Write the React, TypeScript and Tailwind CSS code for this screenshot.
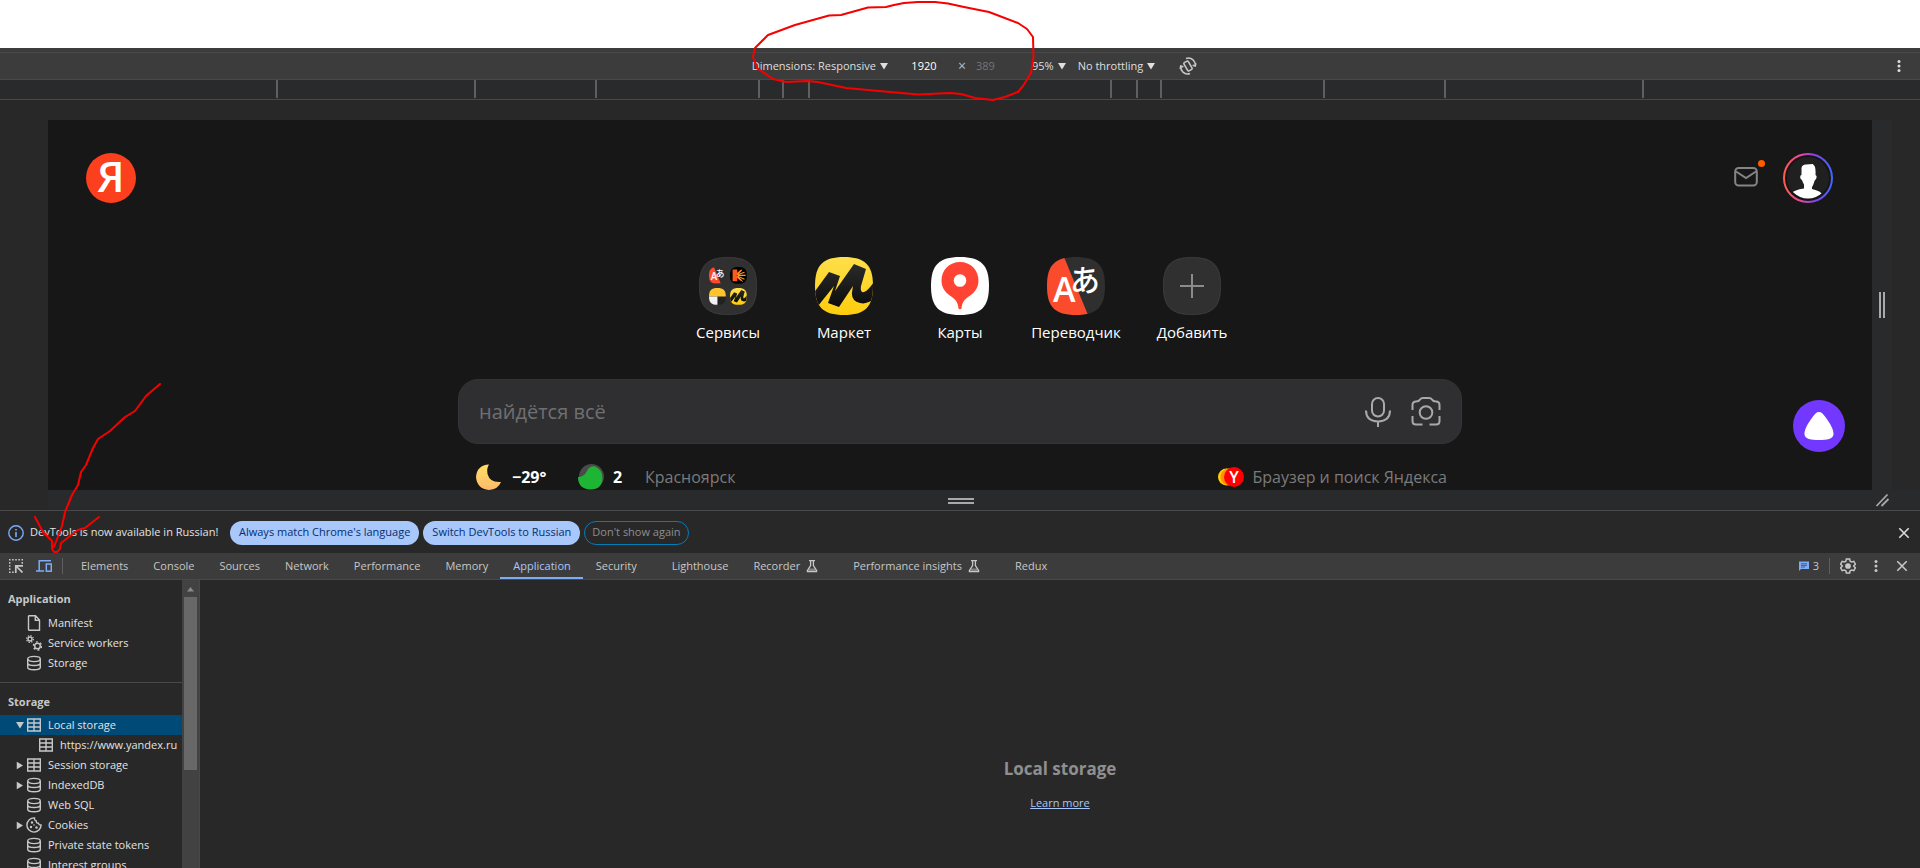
import { ReactNode } from "react";

const ruler = [198, 121, 163, 24, 26];

function Tri({ className = "" }: { className?: string }) {
  return (
    <svg viewBox="0 0 8 7" className={`h-[7px] w-2 shrink-0 fill-current ${className}`} aria-hidden="true">
      <path d="M0 0h8L4 6.5z" />
    </svg>
  );
}

function Close() {
  return (
    <svg viewBox="0 0 12 12" className="size-3" fill="none" stroke="currentColor" strokeWidth="1.6" aria-hidden="true">
      <path d="M1.3 1.3l9.4 9.4M10.7 1.3l-9.4 9.4" />
    </svg>
  );
}

function Dots() {
  return (
    <svg viewBox="0 0 4 14" className="h-[14px] w-1 fill-current" aria-hidden="true">
      <circle cx="2" cy="2.4" r="1.5" />
      <circle cx="2" cy="7" r="1.5" />
      <circle cx="2" cy="11.6" r="1.5" />
    </svg>
  );
}

function Flask() {
  return (
    <svg viewBox="0 0 12 14" className="h-[14px] w-3" fill="none" stroke="currentColor" strokeWidth="1.3" aria-hidden="true">
      <path d="M3 1.6h6M4.6 1.6v5L1.4 11.6q-.5 1 .6 1h8q1.100 0 .6-1L7.400 6.600v-5" />
      <path d="M3.500 9.500h5l1.500 2.500h-8z" fill="currentColor" stroke="none" opacity=".5" />
    </svg>
  );
}

function DeviceToolbar() {
  const tri = <Tri className="ml-1" />;
  return (
    <div className="border-t-4 border-[#3c3c3c]">
      <div className="flex h-7 items-center border-y border-[#494949] bg-[#3c3c3c] text-[#dfdfdf]">
        <div className="flex-1 pl-12" />
        <div className="flex items-center">
          <button className="flex items-center whitespace-nowrap">Dimensions: Responsive{tri}</button>
          <input aria-label="Width" defaultValue="1920" className="ml-3 w-12 bg-transparent text-center text-white" />
          <span className="w-7 text-center text-sm text-[#bdbdbd]">×</span>
          <input aria-label="Height" defaultValue="389" className="w-8 bg-transparent text-[#757575]" />
          <button className="ml-6 flex items-center">95%{tri}</button>
          <button className="ml-3 flex items-center whitespace-nowrap">No throttling{tri}</button>
          <button aria-label="Rotate" className="ml-6 text-[#c7c7c7]">
            <svg viewBox="0 0 18 18" className="size-[18px]" fill="none" stroke="currentColor" strokeWidth="1.6">
              <rect x="6.500" y="4.300" width="5" height="9.400" rx="1" transform="rotate(-30 9 9)" />
              <path d="M7 1.500Q11 0 14 2.800Q16.600 5.500 16.300 9M16.800 6.200L16.300 9L13.600 8.200M11 16.500Q7 18 4 15.200Q1.400 12.500 1.700 9M1.200 11.800L1.700 9L4.400 9.800" />
            </svg>
          </button>
        </div>
        <div className="flex flex-1 justify-end pr-[19px]">
          <button aria-label="More options"><Dots /></button>
        </div>
      </div>
    </div>
  );
}

function Ruler() {
  return (
    <div className="flex h-5 justify-center border-b border-[#494949] bg-[#292a2b] pb-px">
      {ruler.map((w, i) => (
        <div key={i} className="flex h-[18px]">
          <div className="w-0.5 bg-[#5f5f5f]" />
          <div style={{ width: w - 2 }} />
        </div>
      ))}
      <div className="w-0.5 bg-[#5f5f5f]" />
      <div className="w-[300px]" />
      <div className="w-0.5 bg-[#5f5f5f]" />
      {[...ruler].reverse().map((w, i) => (
        <div key={i} className="flex h-[18px]">
          <div style={{ width: w - 2 }} />
          <div className="w-0.5 bg-[#5f5f5f]" />
        </div>
      ))}
    </div>
  );
}

const SQ = "M29 0C50 0 58 8 58 29S50 58 29 58S0 50 0 29S8 0 29 0z";

function MarketMark({ id }: { id: string }) {
  return (
    <>
      <defs>
        <linearGradient id={id} x1="0" y1="0" x2="0" y2="1">
          <stop offset="0" stopColor="#ffdf4a" />
          <stop offset="1" stopColor="#fecd0c" />
        </linearGradient>
        <linearGradient id={`${id}-b`} x1="0" y1="0" x2="0" y2="1">
          <stop offset="0" stopColor="#2b2b2b" />
          <stop offset="1" stopColor="#0c0c0c" />
        </linearGradient>
        <clipPath id={`${id}-c`}><path d={SQ} /></clipPath>
      </defs>
      <path d={SQ} fill={`url(#${id})`} />
      <g clipPath={`url(#${id}-c)`}>
        <path d="M-2 37L14 15L25 19L20 34L39 7L51 12L46 29Q45 36 49 35Q54 33 60 23V41Q52 48 45 46Q36 44 37 35L38 29L24 50L13 46L19 29L3 49z" fill={`url(#${id}-b)`} />
      </g>
    </>
  );
}

function TranslateMark({ id }: { id: string }) {
  return (
    <>
      <defs><clipPath id={id}><path d={SQ} /></clipPath></defs>
      <path d={SQ} fill="#2f2f2f" />
      <path d="M0 0H17L41 58H0z" fill="#fb4b2d" clipPath={`url(#${id})`} />
      <text x="6" y="45" fontSize="34" fill="#fff" fontFamily="Open Sans, sans-serif" fontWeight="600">A</text>
      <text x="23" y="34" fontSize="30" fill="#fff" fontFamily="Noto Sans CJK JP, sans-serif" fontWeight="500">あ</text>
    </>
  );
}

function Services() {
  return (
    <svg viewBox="0 0 58 58" className="size-[58px]" aria-hidden="true">
      <path d={SQ} fill="#303030" />
      <path d="M29 .5C49.500 .5 57.500 8.500 57.500 29S49.500 57.500 29 57.500S.5 49.500 .5 29S8.500 .5 29 .5z" fill="none" stroke="#3a3a3a" />
      <g transform="translate(10 10) scale(.29)"><TranslateMark id="tr-s" /></g>
      <g transform="translate(31 10) scale(.29)">
        <path d={SQ} fill="#000" />
        <path d="M12 12h10v34h-10zM20 29L38 12M20 29L38 46" stroke="#ff5a1c" strokeWidth="6" fill="#ff5a1c" />
        <path d="M26 27L50 18M26 29H54M26 32L50 42" stroke="#ff9d1c" strokeWidth="4" />
        <path d="M25 25L42 9M26 34L44 50" stroke="#d9d02c" strokeWidth="3" />
      </g>
      <g transform="translate(10 31) scale(.29)">
        <path d={SQ} fill="#222" />
        <path d="M0 29C0 8 8 0 29 0S58 8 58 29z" fill="#ffc42b" />
        <path d="M0 29H29V58C8 58 0 50 0 29z" fill="#f2f2f2" />
      </g>
      <g transform="translate(31 31) scale(.29)"><MarketMark id="mk-s" /></g>
    </svg>
  );
}

const apps: { label: string; icon: ReactNode }[] = [
  { label: "Сервисы", icon: <Services /> },
  { label: "Маркет", icon: <svg viewBox="0 0 58 58" className="size-[58px]" aria-hidden="true"><MarketMark id="mk" /></svg> },
  {
    label: "Карты",
    icon: (
      <svg viewBox="0 0 58 58" className="size-[58px]" aria-hidden="true">
        <path d={SQ} fill="#fff" />
        <path d="M29 5C39.500 5 47.500 13 47.500 23.500C47.500 32 42 37 37 40C33 43 31 46 30.500 51.500Q29 53 27.500 51.500C27 46 25 43 21 40C16 37 10.500 32 10.500 23.500C10.500 13 18.500 5 29 5z" fill="#ff4433" />
        <circle cx="29" cy="23.500" r="6.300" fill="#fff" />
      </svg>
    ),
  },
  { label: "Переводчик", icon: <svg viewBox="0 0 58 58" className="size-[58px]" aria-hidden="true"><TranslateMark id="tr" /></svg> },
  {
    label: "Добавить",
    icon: (
      <svg viewBox="0 0 58 58" className="size-[58px]" aria-hidden="true">
        <path d={SQ} fill="#303030" />
        <path d="M29 .5C49.500 .5 57.500 8.500 57.500 29S49.500 57.500 29 57.500S.5 49.500 .5 29S8.500 .5 29 .5z" fill="none" stroke="#3a3a3a" />
        <path d="M29 17v24M17 29h24" stroke="#8b8b8b" strokeWidth="2" />
      </svg>
    ),
  },
];

function YandexPage() {
  return (
    <main className="flex h-[370px] min-w-0 flex-1 flex-col overflow-hidden bg-[#171717] text-white">
      <header className="flex items-start justify-between pt-[33px] pr-[39px] pl-[38px]">
        <a href="#home" aria-label="Яндекс" className="flex size-[50px] items-center justify-center rounded-full bg-[#fc3f1d] text-[42px] leading-none font-semibold">
          <span className="pb-1">Я</span>
        </a>
        <div className="flex items-center gap-[25px]">
          <a href="#mail" aria-label="Почта" className="relative text-[#858585]">
            <svg viewBox="0 0 24 20" className="mb-0.5 h-5 w-6" fill="none" stroke="currentColor" strokeWidth="2">
              <rect x="1.200" y="1" width="21.600" height="17.600" rx="3.500" />
              <path d="M2 4.500L12 11L22 4.500" />
            </svg>
            <span className="absolute -top-[7px] -right-[7px] size-[7px] rounded-full bg-[#ff5c00]" />
          </a>
          <button aria-label="Профиль" className="size-[50px]">
            <svg viewBox="0 0 50 50" className="size-[50px]">
              <defs>
                <linearGradient id="ring">
                  <stop offset="0" stopColor="#ff5c4d" />
                  <stop offset=".35" stopColor="#eb469f" />
                  <stop offset=".65" stopColor="#8341ef" />
                  <stop offset="1" stopColor="#3f68f9" />
                </linearGradient>
                <clipPath id="face"><circle cx="25" cy="25" r="20.500" /></clipPath>
              </defs>
              <circle cx="25" cy="25" r="24" fill="#151515" stroke="url(#ring)" strokeWidth="2" />
              <circle cx="25" cy="25" r="21" fill="#202020" />
              <path clipPath="url(#face)" fill="#fff" d="M18.500 15Q19 11.500 23 11.500L30 11L30.500 12Q33 13 32.500 22Q34.500 23 33 26Q32 27 31.500 28Q30 33 29 34V36Q38 38 40 42L38 48H12L9 40Q11 37 21 35.500V31.500Q19.500 29 19 27Q16.500 26 17.500 22.500L18.500 22z" />
            </svg>
          </button>
        </div>
      </header>

      <nav className="mt-[54px] flex justify-center">
        {apps.map((a) => (
          <a key={a.label} href="#app" className="flex w-[116px] flex-col items-center gap-[5px] text-[15px] leading-6">
            {a.icon}
            {a.label}
          </a>
        ))}
      </nav>

      <div className="flex">
        <div className="flex-1" />
        <div className="mt-[35px] w-[1004px]">
          <form className="flex h-[65px] items-center rounded-[20px] border border-[#343436] bg-[#2f2f31] px-5 text-[#a9a9a9]">
            <input aria-label="Поиск" placeholder="найдётся всё" className="min-w-0 flex-1 bg-transparent text-xl placeholder:text-[#6f6f71]" />
            <button type="button" aria-label="Голосовой поиск">
              <svg viewBox="0 0 26 30" className="h-[30px] w-[26px]" fill="none" stroke="currentColor" strokeWidth="2">
                <rect x="7" y="1" width="12" height="18.500" rx="6" />
                <path d="M1 13.500Q1 24 13 24.500Q25 24 25 13.500M13 24.500V30" />
              </svg>
            </button>
            <button type="button" aria-label="Поиск по картинке" className="ml-5">
              <svg viewBox="0 0 30 30" className="size-[30px]" fill="none" stroke="currentColor" strokeWidth="2">
                <path d="M1.500 13V8Q1.500 4.500 5 4.500Q8 4.500 9 2.500Q10 1 12 1H18Q20 1 21 2.500Q22 4.500 25 4.500Q28.500 4.500 28.500 8V13M28.500 19V24Q28.500 27.500 25 27.500H18.500M11.500 27.500H5Q1.500 27.500 1.500 24V19" />
                <circle cx="15" cy="15.500" r="6.300" />
              </svg>
            </button>
          </form>
          <div className="mt-5 flex h-[26px] items-center pr-[15px] pl-[18px] text-base">
            <svg viewBox="0 0 25 26" className="h-[26px] w-[25px]">
              <defs><linearGradient id="moon" x1="0" y1="0" x2="0" y2="1"><stop offset="0" stopColor="#ffe066" /><stop offset="1" stopColor="#ffb96a" /></linearGradient></defs>
              <path d="M13 .5Q10.500 4 11.500 10Q14 19 25 18Q22 25.500 13 26Q1 25 0 13Q1 1 13 .5z" fill="url(#moon)" />
            </svg>
            <b className="ml-[11px] w-[66px] font-bold">−29°</b>
            <svg viewBox="0 0 26 26" className="size-[26px]">
              <circle cx="13.500" cy="12.500" r="12.500" fill="#4a4a4a" />
              <path d="M0 13Q6 13 9 7Q12 1.500 17 2.500Q24 5 24.500 14Q24 25.500 12.500 25.500Q0 25 0 13z" fill="#1fb534" />
            </svg>
            <b className="ml-2 w-[33px] pl-px font-bold">2</b>
            <span className="text-[#7b7b7b]">Красноярск</span>
            <a href="#browser" className="ml-auto flex items-center gap-2 text-[#7b7b7b]">
              <svg viewBox="0 0 26 20" className="h-5 w-[26px]">
                <circle cx="8.500" cy="10" r="8.500" fill="#ffcf00" />
                <circle cx="11" cy="10" r="8.500" fill="#ff9000" />
                <circle cx="16" cy="10" r="10" fill="#f00" />
                <text x="16" y="16" textAnchor="middle" fontSize="16" fontWeight="600" fill="#fff" fontFamily="Open Sans, sans-serif">Y</text>
              </svg>
              Браузер и поиск Яндекса
            </a>
          </div>
        </div>
        <div className="flex flex-1 items-start justify-end pt-14">
          <button aria-label="Алиса" className="mr-[27px] flex size-[52px] items-center justify-center rounded-full bg-[#7338ff]">
            <svg viewBox="0 0 30 28" className="h-7 w-[30px] fill-white">
              <path d="M15 0C17.500 0 19 2 21 4.500C26 11 30 18 29.500 22.500C29 27 23 28 15 28S1 27 .5 22.500C0 18 4 11 9 4.500C11 2 12.500 0 15 0z" />
            </svg>
          </button>
        </div>
      </div>
    </main>
  );
}

function Emulator() {
  return (
    <section className="bg-[#282828] pt-5 pl-12">
      <div className="flex">
        <YandexPage />
        <div className="flex w-12">
          <div className="flex w-5 items-center justify-start gap-0.5 bg-[#292a2b] pl-[7px]">
            <div className="h-[26px] w-0.5 bg-[#a9a9a9]" />
            <div className="h-[26px] w-0.5 bg-[#a9a9a9]" />
          </div>
        </div>
      </div>
      <div className="flex h-5 items-center bg-[#292a2b]">
        <div className="flex flex-1 flex-col items-center gap-0.5 pt-px pl-[2px]">
          <div className="h-0.5 w-[26px] bg-[#a9a9a9]" />
          <div className="h-0.5 w-[26px] bg-[#a9a9a9]" />
        </div>
        <svg viewBox="0 0 48 20" className="h-5 w-12" stroke="#a9a9a9" strokeWidth="1.800" aria-hidden="true">
          <path d="M4.500 16L15.500 4.500M9.500 16L16.500 9" />
        </svg>
      </div>
    </section>
  );
}

function InfoBar() {
  return (
    <div className="flex h-[43px] items-center border-t border-[#494949] bg-[#282828] pt-px pl-2 text-[#e3e3e3]">
      <svg viewBox="0 0 16 16" className="size-4" fill="none" stroke="#7cacf8" strokeWidth="1.400" aria-hidden="true">
        <circle cx="8" cy="8" r="7.200" />
        <path d="M8 7v5M8 4v1.600" strokeWidth="1.600" />
      </svg>
      <span className="mx-1.5 min-w-[194px] whitespace-nowrap">DevTools is now available in Russian!</span>
      <div className="flex gap-1">
        <button className="h-6 rounded-full bg-[#a8c7fa] px-[9px] whitespace-nowrap text-[#062e6f]">Always match Chrome's language</button>
        <button className="h-6 rounded-full bg-[#a8c7fa] px-[9px] whitespace-nowrap text-[#062e6f]">Switch DevTools to Russian</button>
        <button className="h-6 rounded-full border border-[#047db7] px-[7px] whitespace-nowrap text-[#8f8f8f]">Don't show again</button>
      </div>
      <button aria-label="Close infobar" className="mr-[10px] ml-auto text-[#dcdcdc]"><Close /></button>
    </div>
  );
}

const tabs = [
  { name: "Elements" },
  { name: "Console" },
  { name: "Sources" },
  { name: "Network" },
  { name: "Performance" },
  { name: "Memory" },
  { name: "Application", active: true },
  { name: "Security", wide: true },
  { name: "Lighthouse" },
  { name: "Recorder", flask: true },
  { name: "Performance insights", flask: true },
  { name: "Redux" },
];

function TabBar() {
  return (
    <div className="flex h-[27px] items-stretch border-b border-[#494949] bg-[#3c3c3c] text-[#c7c7c7]">
      <div className="flex items-center pl-[9px]">
        <button aria-label="Inspect">
          <svg viewBox="0 0 14 14" className="size-[14px]" fill="none" stroke="currentColor" strokeWidth="1.500">
            <path d="M.7 0v14M0 .7h14M13.300 0v5M0 13.300h5" strokeDasharray="1.600 1.500" />
            <path d="M6.800 14V6.800H14M7 7l6.500 6.500" strokeWidth="1.700" />
          </svg>
        </button>
        <button aria-label="Toggle device toolbar" className="ml-[13px] text-[#7cacf8]">
          <svg viewBox="0 0 16 12" className="h-3 w-4" fill="none" stroke="currentColor" strokeWidth="1.500">
            <path d="M15 .8H3.200V11M0 11h8" />
            <rect x="10.300" y="4" width="5" height="7.200" />
          </svg>
        </button>
        <div className="ml-[10px] h-4 w-px bg-[#5e5e5e]" />
      </div>
      <div className="ml-[5px] flex">
        {tabs.map((t) => (
          <button
            key={t.name}
            className={`flex items-center gap-1.5 border-y-2 border-t-transparent pl-[13px] whitespace-nowrap ${t.flask || t.wide ? "pr-[22px]" : "pr-3"} ${t.active ? "border-b-[#7cacf8] text-[#a8c7fa]" : "border-b-transparent"}`}
          >
            {t.name}
            {t.flask && <Flask />}
          </button>
        ))}
      </div>
      <div className="ml-auto flex items-center pr-3">
        <button aria-label="Issues" className="flex items-center gap-1">
          <svg viewBox="0 0 10 10" className="size-[10px]"><path d="M0 .5h10v7.500H2L0 10z" fill="#7cacf8" /><path d="M2 2.800h6M2 4.400h6M2 6h4" stroke="#3c4a66" strokeWidth=".8" /></svg>
          3
        </button>
        <div className="mx-[10px] h-4 w-px bg-[#5e5e5e]" />
        <button aria-label="Settings">
          <svg viewBox="0 0 24 24" className="size-4" fill="none" stroke="currentColor" strokeWidth="2.200">
            <path d="M9.500 1.500h5l.7 3.300l2.300 1.300l3.200-1l2.400 4.200l-2.500 2.300v.8l2.500 2.300l-2.400 4.200l-3.200-1l-2.300 1.300l-.7 3.300h-5l-.7-3.300l-2.300-1.300l-3.200 1L.9 14.700l2.500-2.300v-.8L.9 9.300l2.400-4.200l3.200 1l2.300-1.300z" />
            <circle cx="12" cy="12" r="3.200" fill="currentColor" />
          </svg>
        </button>
        <button aria-label="More" className="ml-[18px]"><Dots /></button>
        <button aria-label="Close DevTools" className="ml-[18px]"><Close /></button>
      </div>
    </div>
  );
}

type IconName = "file" | "gears" | "db" | "table" | "cookie";

function TreeIcon({ name }: { name: IconName }) {
  return (
    <svg viewBox="0 0 16 16" className="size-4 shrink-0 text-[#c7c7c7]" fill="none" stroke="currentColor" strokeWidth="1.400" aria-hidden="true">
      {name === "file" && <path d="M3 .8h6.500L13.500 5v10.200H3q-.5 0-.5-.6V1.400q0-.6.5-.6zM9.300 1v4.200h4" />}
      {name === "db" && (
        <>
          <ellipse cx="8" cy="4" rx="6.300" ry="2.600" />
          <path d="M1.700 4v8.200q0 2.500 6.300 2.500t6.300-2.500V4M1.700 8q0 2.500 6.300 2.500T14.300 8" />
        </>
      )}
      {name === "table" && <path d="M1.700 2h12.600v12H1.700zM8 2v12M1.700 6h12.600M1.700 10h12.600" />}
      {name === "gears" && (
        <>
          <circle cx="4" cy="4" r="2" />
          <circle cx="4" cy="4" r="3.400" strokeDasharray="1.300 1.370" strokeWidth="1.200" />
          <circle cx="11.500" cy="11" r="2.800" />
          <circle cx="11.500" cy="11" r="4.100" strokeDasharray="2 2.290" />
        </>
      )}
      {name === "cookie" && (
        <>
          <path d="M8.500 .9A7.100 7.100 0 1 0 15.100 8Q13 8.300 12.500 6.300Q10.200 6.500 10.300 4Q8 3.500 8.500 .9z" />
          <g fill="currentColor" stroke="none"><circle cx="6" cy="5.500" r="1.200" /><circle cx="5" cy="10" r="1.200" /><circle cx="10.500" cy="10.500" r="1.200" /><circle cx="8" cy="8" r=".8" /></g>
        </>
      )}
    </svg>
  );
}

interface Row { label: string; icon: IconName; state?: "open" | "closed"; nested?: boolean; selected?: boolean }

const appRows: Row[] = [
  { label: "Manifest", icon: "file" },
  { label: "Service workers", icon: "gears" },
  { label: "Storage", icon: "db" },
];

const storageRows: Row[] = [
  { label: "Local storage", icon: "table", state: "open", selected: true },
  { label: "https://www.yandex.ru", icon: "table", nested: true },
  { label: "Session storage", icon: "table", state: "closed" },
  { label: "IndexedDB", icon: "db", state: "closed" },
  { label: "Web SQL", icon: "db" },
  { label: "Cookies", icon: "cookie", state: "closed" },
  { label: "Private state tokens", icon: "db" },
  { label: "Interest groups", icon: "db" },
];

function Tree({ rows }: { rows: Row[] }) {
  return (
    <ul>
      {rows.map((r) => (
        <li key={r.label} className={`flex h-5 items-center whitespace-nowrap ${r.nested ? "pl-[26px]" : "pl-[14px]"} ${r.selected ? "bg-[#004a77]" : ""}`}>
          <span className="flex w-3 shrink-0 justify-center text-[#c7c7c7]">
            {r.state && <Tri className={r.state === "closed" ? "-rotate-90" : ""} />}
          </span>
          <TreeIcon name={r.icon} />
          <span className="pl-1.5">{r.label}</span>
        </li>
      ))}
    </ul>
  );
}

function ApplicationPanel() {
  return (
    <div className="flex min-h-0 flex-1 bg-[#282828]">
      <aside className="flex w-[200px] overflow-hidden border-r border-[#494949]">
        <div className="w-[182px] overflow-hidden text-[#e3e3e3]">
          <h2 className="px-2 pt-[9px] pb-1 leading-5 font-bold text-[#c7c7c7]">Application</h2>
          <Tree rows={appRows} />
          <h2 className="mt-[9px] border-t border-[#494949] px-2 pt-[9px] pb-[3px] leading-5 font-bold text-[#c7c7c7]">Storage</h2>
          <Tree rows={storageRows} />
        </div>
        <div className="w-[17px] bg-[#424242] px-0.5">
          <svg viewBox="0 0 13 17" className="h-[17px] w-[13px]" aria-hidden="true"><path d="M3 11.500L6.500 7L10 11.500z" fill="#8a8a8a" /></svg>
          <div className="h-[173px] bg-[#686868]" />
        </div>
      </aside>
      <section className="flex flex-1 flex-col items-center pt-[177px]">
        <h1 className="text-[17px] leading-6 font-bold text-[#8f8f8f]">Local storage</h1>
        <a href="#learn" className="mt-3 leading-5 text-[#a8c7fa] underline">Learn more</a>
      </section>
    </div>
  );
}

function Annotations() {
  return (
    <svg viewBox="0 0 1920 868" className="pointer-events-none absolute top-0 left-1/2 h-[868px] w-[1920px] -translate-x-1/2" fill="none" stroke="#f60000" strokeWidth="2" strokeLinejoin="round" strokeLinecap="round" aria-hidden="true">
      <path d="M918 2L904 3L894 5L886 7L868 7.500L841 15L829 15.500L795 25L768 35L755 48L753 57L757 68L773 79L786 82L807 81L818 82L846 88L879 91L918 94.500L950 93L961 94L975 98L993 100L1005 97L1018 92L1023 86L1031 73L1033.500 57L1033 37L1027 29L1018 23L989 12L964 7L948 3.500L935 2z" />
      <path d="M160 384L146 396L135 411L125 417L110 431L98 439L93 448L86 465L81 472L78 485L72 495L65 512L62 526L54 547M35 517L43 532L52 541L52 549L54 552L57 552L60 549L61 543L78 530L85 528L99 517" />
    </svg>
  );
}

export default function App() {
  return (
    <div className="relative flex h-screen min-h-[640px] flex-col overflow-hidden bg-white pt-12 font-['Open_Sans','Noto_Sans',sans-serif] text-[11px]">
      <DeviceToolbar />
      <Ruler />
      <Emulator />
      <InfoBar />
      <TabBar />
      <ApplicationPanel />
      <Annotations />
    </div>
  );
}
